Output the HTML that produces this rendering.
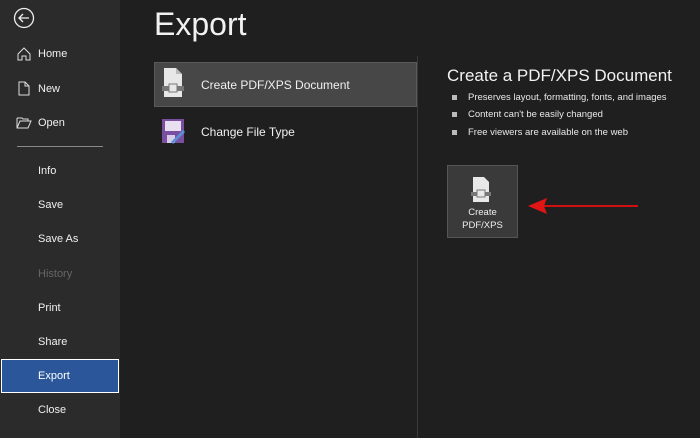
<!DOCTYPE html>
<html><head><style>
*{margin:0;padding:0;box-sizing:border-box}
body{width:700px;height:438px;background:#1f1f1f;font-family:"Liberation Sans",sans-serif;color:#fff;position:relative;overflow:hidden}
.side{position:absolute;left:0;top:0;width:120px;height:438px;background:#2b2b2b}
.it{position:absolute;left:38px;font-size:11px;color:#f0f0f0}
.t{position:absolute;font-size:11px;color:#f0f0f0}
.sel{position:absolute;left:1px;top:359px;width:118px;height:34px;background:#2b579a;border:1px solid #fff}
.sel span{position:absolute;left:36px;top:10px;font-size:11px}
.bullet{position:absolute;left:452px;width:5px;height:5px;background:#bbb}
.bt{position:absolute;left:468px;font-size:9.5px;color:#e8e8e8}
</style></head><body>
<div class="side">
<svg style="position:absolute;left:13px;top:7px" width="22" height="22" viewBox="0 0 22 22"><circle cx="11" cy="11" r="9.5" fill="none" stroke="#eee" stroke-width="1.3"/><path d="M16 11H6M10 7L6 11L10 15" fill="none" stroke="#eee" stroke-width="1.3"/></svg>
<svg style="position:absolute;left:17px;top:47px" width="14" height="14" viewBox="0 0 14 14"><path d="M1 7L7 1L13 7V13H9V9H5V13H1Z" fill="none" stroke="#ddd"/></svg>
<div class="it" style="top:48px">Home</div>
<svg style="position:absolute;left:18px;top:81px" width="12" height="15" viewBox="0 0 12 15"><path d="M1 1H7L11 5V14H1Z M7 1V5H11" fill="none" stroke="#ddd"/></svg>
<div class="it" style="top:83px">New</div>
<svg style="position:absolute;left:16px;top:116px" width="16" height="13" viewBox="0 0 16 13"><path d="M1 2H6L7 3H12V5 M1 2V12H12L15 5H4L1 12" fill="none" stroke="#ddd"/></svg>
<div class="it" style="top:117px">Open</div>
<div style="position:absolute;left:17px;top:146px;width:86px;height:1px;background:#888"></div>
<div class="it" style="top:165px">Info</div>
<div class="it" style="top:199px">Save</div>
<div class="it" style="top:233px">Save As</div>
<div class="it" style="top:268px;color:#666">History</div>
<div class="it" style="top:302px">Print</div>
<div class="it" style="top:336px">Share</div>
<div class="sel"><span>Export</span></div>
<div class="it" style="top:404px">Close</div>
</div>
<div style="position:absolute;left:154px;top:6px;font-size:32px;color:#f2f2f2">Export</div>
<div style="position:absolute;left:154px;top:62px;width:263px;height:45px;background:#474747;border:1px solid #5a5a5a"></div>
<svg style="position:absolute;left:162px;top:67px" width="22" height="32" viewBox="0 0 22 32"><path d="M2 1H14L20 7V30H2Z" fill="#e8e8e8"/><path d="M14 1V7H20" fill="#bbb"/><rect x="0" y="19" width="22" height="5" fill="#777"/><rect x="7" y="17" width="8" height="8" fill="#e8e8e8" stroke="#777"/></svg>
<div class="t" style="left:201px;top:78px;font-size:12px">Create PDF/XPS Document</div>
<svg style="position:absolute;left:162px;top:119px" width="24" height="26" viewBox="0 0 24 26"><rect x="0" y="0" width="22" height="24" fill="#7a4fa0"/><rect x="3" y="2" width="16" height="10" fill="#e8e0f0"/><rect x="5" y="16" width="8" height="8" fill="#d8cce8"/><path d="M10 24L22 12" stroke="#5b8fd8" stroke-width="3"/></svg>
<div class="t" style="left:201px;top:125px;font-size:12px">Change File Type</div>
<div style="position:absolute;left:417px;top:56px;width:1px;height:382px;background:#3a3a3a"></div>
<div style="position:absolute;left:447px;top:66px;font-size:17px;color:#f2f2f2">Create a PDF/XPS Document</div>
<div class="bullet" style="top:95px"></div><div class="bt" style="top:92px">Preserves layout, formatting, fonts, and images</div>
<div class="bullet" style="top:112px"></div><div class="bt" style="top:109px">Content can't be easily changed</div>
<div class="bullet" style="top:130px"></div><div class="bt" style="top:127px">Free viewers are available on the web</div>
<div style="position:absolute;left:447px;top:165px;width:71px;height:73px;background:#3a3a3a;border:1px solid #555"></div>
<svg style="position:absolute;left:471px;top:176px" width="20" height="27" viewBox="0 0 20 27"><path d="M2 1H13L18 6V26H2Z" fill="#e8e8e8"/><rect x="0" y="16" width="20" height="4" fill="#777"/><rect x="6" y="14" width="8" height="7" fill="#e8e8e8" stroke="#777"/></svg>
<div style="position:absolute;left:447px;top:206px;width:71px;text-align:center;font-size:9.5px;line-height:13px;color:#eee">Create<br>PDF/XPS</div>
<svg style="position:absolute;left:525px;top:195px" width="115" height="22" viewBox="0 0 115 22"><path d="M15 11H113" stroke="#d01010" stroke-width="2"/><path d="M3 11L22 3L19 11L22 19Z" fill="#e01515"/></svg>
</body></html>
